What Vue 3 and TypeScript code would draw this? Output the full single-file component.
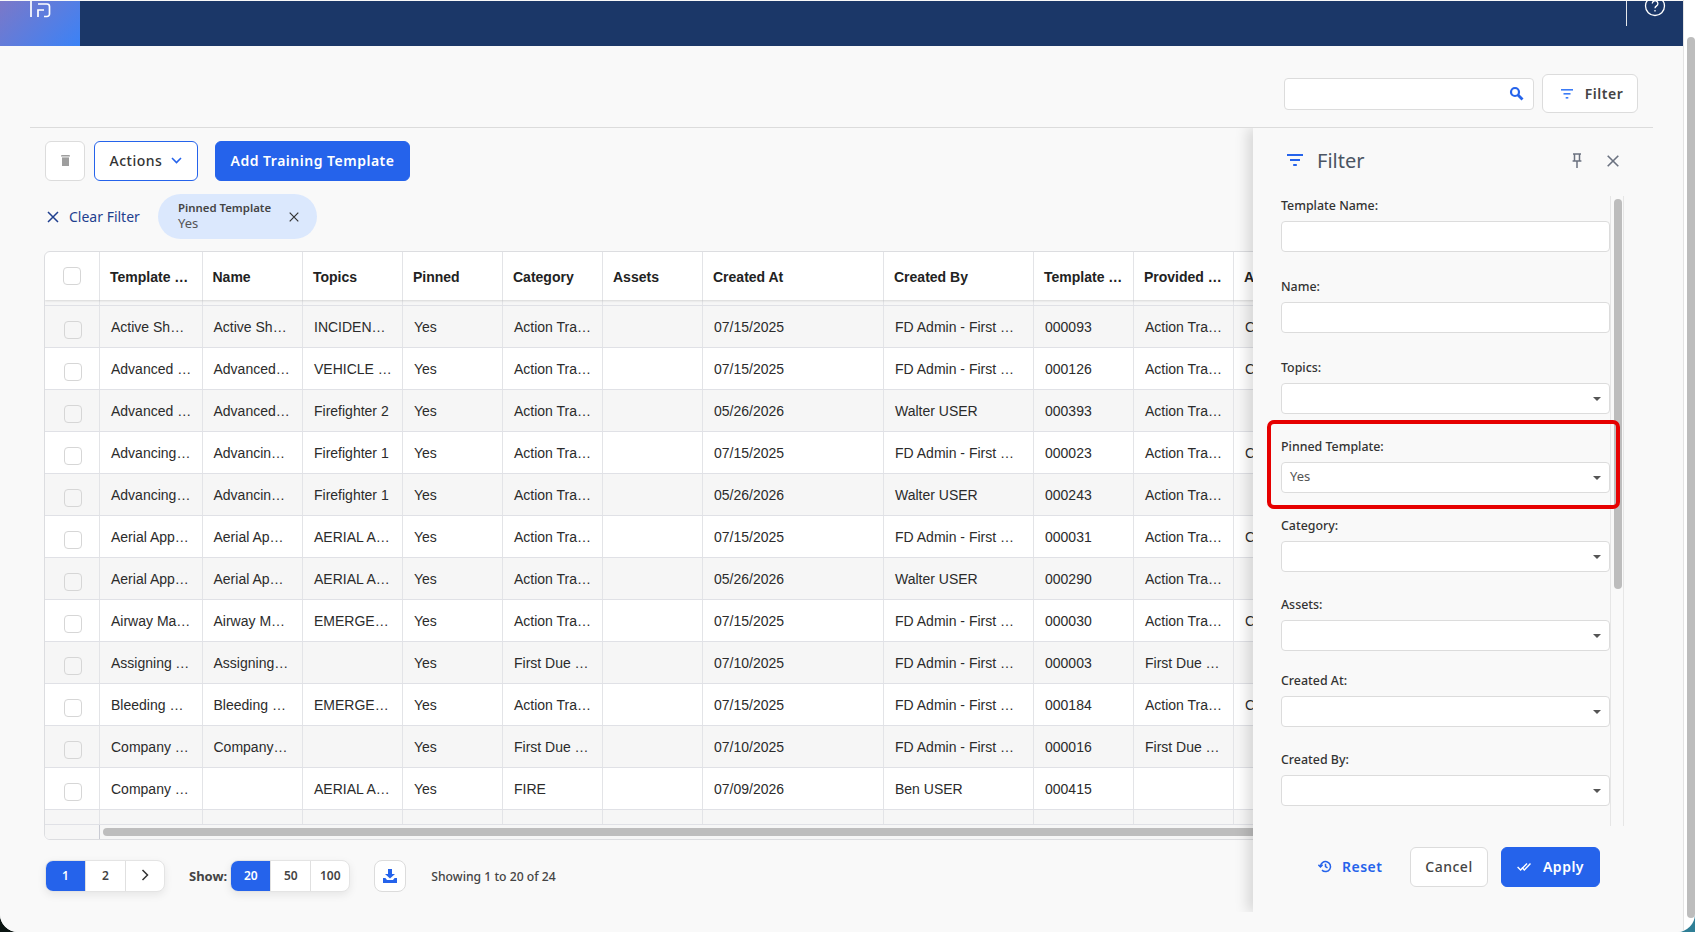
<script setup lang="ts">
type Row = [string, string, string, string, string, string, string, string, string];

const fd = "FD Admin - First Due";
const at = "Action Training";
const fdt = "First Due Training";

const rows: Row[] = [
  ["Active Shooter Response", "Active Shooter Response", "INCIDENT COMMAND", at, "07/15/2025", fd, "000093", at, "C"],
  ["Advanced Vehicle Rescue", "Advanced Vehicle Rescue", "VEHICLE RESCUE", at, "07/15/2025", fd, "000126", at, "C"],
  ["Advanced Hose Handling", "Advanced Hose Handling", "Firefighter 2", at, "05/26/2026", "Walter USER", "000393", at, ""],
  ["Advancing Hose Lines", "Advancing Hose Lines", "Firefighter 1", at, "07/15/2025", fd, "000023", at, "C"],
  ["Advancing Hose Lines", "Advancing Hose Lines", "Firefighter 1", at, "05/26/2026", "Walter USER", "000243", at, ""],
  ["Aerial Apparatus", "Aerial Apparatus", "AERIAL APPARATUS", at, "07/15/2025", fd, "000031", at, "C"],
  ["Aerial Apparatus", "Aerial Apparatus", "AERIAL APPARATUS", at, "05/26/2026", "Walter USER", "000290", at, ""],
  ["Airway Management", "Airway Management", "EMERGENCY CARE", at, "07/15/2025", fd, "000030", at, "C"],
  ["Assigning Tasks", "Assigning Tasks", "", fdt, "07/10/2025", fd, "000003", fdt, ""],
  ["Bleeding Control", "Bleeding Control", "EMERGENCY CARE", at, "07/15/2025", fd, "000184", at, "C"],
  ["Company Officer", "Company Officer", "", fdt, "07/10/2025", fd, "000016", fdt, ""],
  ["Company Drill", "", "AERIAL APPARATUS", "FIRE", "07/09/2026", "Ben USER", "000415", "", ""],
];

const heads = ["Template Name", "Name", "Topics", "Pinned", "Category", "Assets", "Created At", "Created By", "Template Code", "Provided By", "A"];
const blanks = Array.from({ length: 11 }, (_, i) => i);

const fields = [
  { label: "Template Name:", kind: "input", cls: "" },
  { label: "Name:", kind: "input", cls: "" },
  { label: "Topics:", kind: "select", cls: "" },
  { label: "Pinned Template:", kind: "select", value: "Yes", cls: "marked" },
  { label: "Category:", kind: "select", cls: "" },
  { label: "Assets:", kind: "select", cls: "tight" },
  { label: "Created At:", kind: "select", cls: "" },
  { label: "Created By:", kind: "select", cls: "" },
];
</script>

<template>
  <div class="desktop">
    <div class="window">
      <div class="page">
        <header class="topbar">
          <div class="logo">
            <svg width="22" height="17" viewBox="0 0 22 17" fill="none" stroke="#fff" stroke-width="1.7">
              <path d="M1 0v16" />
              <path d="M8 16V9h6" />
              <path d="M8 3h9a2.500 2.500 0 0 1 2.500 2.500V13a2.500 2.500 0 0 1-2.500 2.500h-3" />
            </svg>
          </div>
          <div class="topbar-end">
            <span class="divider"></span>
            <svg class="help" width="22" height="22" viewBox="0 0 22 22" fill="none" stroke="#fff" stroke-width="1.300">
              <circle cx="11" cy="11" r="9.500" />
              <path d="M8.300 8.500a2.800 2.800 0 1 1 4.300 2.400c-1 .7-1.600 1.200-1.600 2.300" />
              <path d="M11 15v1.400" />
            </svg>
          </div>
        </header>

        <main class="content">
          <div class="search-row">
            <div class="search">
              <svg width="15" height="15" viewBox="0 0 15 15" fill="none" stroke="#2563eb">
                <circle cx="6" cy="6" r="4" stroke-width="2.200" />
                <path d="M9 9l4.500 4.500" stroke-width="2.800" />
              </svg>
            </div>
            <button class="btn filter-btn">
              <svg class="bars" width="12" height="10" viewBox="0 0 12 10" fill="#3b7bf6">
                <rect x="0" y="0" width="12" height="1.600" />
                <rect x="2.500" y="4" width="7" height="1.600" />
                <rect x="4.700" y="8" width="2.600" height="1.600" />
              </svg>
              Filter
            </button>
          </div>
          <div class="rule"></div>

          <div class="toolbar">
            <button class="btn trash">
              <svg width="9" height="11" viewBox="0 0 9 11" fill="#9e9e9e">
                <path d="M1 0h7a1 1 0 0 1 1 1v.600H0V1a1 1 0 0 1 1-1z" />
                <path d="M1 2.400h7V11H1z" />
              </svg>
            </button>
            <button class="btn actions">
              Actions
              <svg width="11" height="7" viewBox="0 0 11 7" fill="none" stroke="#2563eb" stroke-width="1.600">
                <path d="M1 1l4.500 4.500L10 1" />
              </svg>
            </button>
            <button class="btn primary add">Add Training Template</button>
          </div>

          <div class="chips">
            <a class="clear">
              <svg width="12" height="12" viewBox="0 0 12 12" stroke="#1f3f8f" stroke-width="1.500">
                <path d="M1 1l10 10M11 1L1 11" />
              </svg>
              Clear Filter
            </a>
            <div class="chip">
              <div class="chip-text">
                <strong>Pinned Template</strong>
                <span>Yes</span>
              </div>
              <svg width="10" height="10" viewBox="0 0 10 10" stroke="#333" stroke-width="1.200">
                <path d="M.7.7l8.600 8.600M9.300.7L.7 9.300" />
              </svg>
            </div>
          </div>

          <div class="table">
            <div class="row head">
              <div class="cell check"><span class="box"></span></div>
              <div v-for="h in heads" :key="h" class="cell">{{ h }}</div>
            </div>
            <div class="row filler top-filler">
              <div class="cell check"></div>
              <div v-for="b in blanks" :key="b" class="cell"></div>
            </div>
            <div v-for="(r, i) in rows" :key="i" class="row body" :class="{ odd: i % 2 === 0 }">
              <div class="cell check"><span class="box"></span></div>
              <div class="cell">{{ r[0] }}</div>
              <div class="cell name">{{ r[1] }}</div>
              <div class="cell">{{ r[2] }}</div>
              <div class="cell">Yes</div>
              <div class="cell">{{ r[3] }}</div>
              <div class="cell"></div>
              <div class="cell">{{ r[4] }}</div>
              <div class="cell">{{ r[5] }}</div>
              <div class="cell">{{ r[6] }}</div>
              <div class="cell">{{ r[7] }}</div>
              <div class="cell">{{ r[8] }}</div>
            </div>
            <div class="row filler end-filler">
              <div class="cell check"></div>
              <div v-for="b in blanks" :key="b" class="cell"></div>
            </div>
            <div class="hscroll">
              <div class="hscroll-corner"></div>
              <div class="hscroll-track"><div class="hscroll-thumb"></div></div>
            </div>
          </div>

          <div class="pager-row">
            <div class="seg">
              <span class="on">1</span>
              <span>2</span>
              <span>
                <svg width="8" height="12" viewBox="0 0 8 12" fill="none" stroke="#333" stroke-width="1.500">
                  <path d="M1.500 1l5 5-5 5" />
                </svg>
              </span>
            </div>
            <b class="show">Show:</b>
            <div class="seg">
              <span class="on">20</span>
              <span>50</span>
              <span>100</span>
            </div>
            <button class="btn download">
              <svg width="14" height="14" viewBox="0 0 14 14" fill="#2563eb">
                <path d="M5 0h4v5h3L7 9.600 2 5h3z" />
                <path d="M0 9h2.400l1.600 2h6l1.600-2H14v5H0z" />
              </svg>
            </button>
            <span class="count">Showing 1 to 20 of 24</span>
          </div>
        </main>

        <aside class="panel">
          <div class="panel-head">
            <svg width="16" height="13" viewBox="0 0 16 13" fill="#2563eb">
              <rect x="0" y="0" width="16" height="2" />
              <rect x="3" y="5" width="10" height="2" />
              <rect x="6.200" y="10" width="3.600" height="2" />
            </svg>
            <span class="panel-title">Filter</span>
            <svg class="pin" width="10" height="15" viewBox="0 0 10 15" fill="none" stroke="#6b7280" stroke-width="1.500">
              <path d="M1 1h8M2.500 1v6.500M7.500 1v6.500M.6 8h8.800M5 8v7" />
            </svg>
            <svg class="close" width="12" height="12" viewBox="0 0 12 12" stroke="#6b7280" stroke-width="1.600">
              <path d="M.7.7l10.600 10.600M11.300.7L.7 11.300" />
            </svg>
          </div>
          <div class="panel-scroll">
            <div class="form">
              <div v-for="f in fields" :key="f.label" class="field" :class="f.cls">
                <label>{{ f.label }}</label>
                <div class="control">
                  <span>{{ f.value }}</span>
                  <i v-if="f.kind === 'select'" class="caret"></i>
                </div>
              </div>
            </div>
            <div class="panel-track"><div class="panel-thumb"></div></div>
          </div>
          <div class="panel-foot">
            <a class="reset">
              <svg width="14" height="13" viewBox="0 0 14 13" fill="none" stroke="#2563eb" stroke-width="1.500">
                <path d="M2.500 6.500a5 5 0 1 1 1.500 3.600" />
                <path d="M.4 4.800l2.100 2.200 2.100-2.200" />
                <path d="M7.500 3.700v3l2 1.200" />
              </svg>
              Reset
            </a>
            <button class="btn cancel">Cancel</button>
            <button class="btn primary apply">
              <svg width="14" height="9" viewBox="0 0 14 9" fill="none" stroke="#fff" stroke-width="1.400">
                <path d="M.6 5l3 3L10 1.500" />
                <path d="M5 5.500l2.300 2.500L13.500 1.500" />
              </svg>
              Apply
            </button>
          </div>
        </aside>
      </div>
      <div class="page-scroll"><div class="page-thumb"></div></div>
    </div>
  </div>
</template>

<style>
html,
body {
  margin: 0;
  overflow: hidden;
}
</style>

<style scoped>
* {
  box-sizing: border-box;
}

.desktop {
  width: 1695px;
  height: 932px;
  overflow: hidden;
  background: linear-gradient(90deg, #0b1512 0%, #0b1512 50%, #2f7f96 100%);
  font-family: "Noto Sans", sans-serif;
  color: #333;
}

.window {
  display: flex;
  height: 100%;
  border-radius: 0 0 18px 18px;
  overflow: hidden;
  background: #fff;
}

.page {
  position: relative;
  width: 1683px;
  background: #f9f9f9;
  overflow: hidden;
}

.page-scroll {
  flex: 1;
  border-left: 1px solid #e4e4e4;
  padding: 37px 0 14px 3px;
}

.page-thumb {
  height: 100%;
  background: #bdbdbd;
  border-radius: 4px;
}

.topbar {
  display: flex;
  justify-content: space-between;
  height: 45px;
  margin-top: 1px;
  background: #1b3768;
}

.logo {
  width: 80px;
  padding: 0 0 0 30px;
  background: linear-gradient(135deg, #7b78c8 0%, #3b82f6 100%);
  line-height: 0;
}

.topbar-end {
  display: flex;
  align-items: flex-start;
  padding-right: 17px;
}

.divider {
  width: 1px;
  height: 25px;
  background: #e5e7eb;
  margin-right: 17px;
}

.help {
  margin-top: -6px;
}

.content {
  padding-top: 28px;
}

.search-row {
  display: flex;
  justify-content: flex-end;
  align-items: center;
  gap: 8px;
  padding-right: 45px;
}

.search {
  display: flex;
  align-items: center;
  justify-content: flex-end;
  width: 250px;
  height: 32px;
  padding-right: 9px;
  background: #fff;
  border: 1px solid #dcdcdc;
  border-radius: 4px;
}

.btn {
  font-family: inherit;
  background: #fff;
  border: 1px solid #dcdcdc;
  border-radius: 6px;
  cursor: pointer;
  padding: 0 0 2px;
}

.filter-btn {
  display: flex;
  align-items: center;
  justify-content: center;
  gap: 12px;
  width: 96px;
  height: 39px;
  padding: 0 0 0 4px;
  font-size: 14px;
  font-weight: 600;
  letter-spacing: 0.5px;
  color: #444;
}

.rule {
  height: 1px;
  margin: 14px 30px 0 30px;
  background: #dcdcdc;
}

.toolbar {
  display: flex;
  align-items: center;
  margin: 13px 0 0 45px;
  height: 40px;
}

.trash {
  display: flex;
  align-items: center;
  justify-content: center;
  width: 40px;
  height: 40px;
}

.actions {
  display: flex;
  align-items: center;
  justify-content: center;
  gap: 9px;
  width: 104px;
  height: 40px;
  margin-left: 9px;
  border-color: #2563eb;
  font-size: 14px;
  font-weight: 500;
  letter-spacing: 0.5px;
  color: #333;
}

.primary {
  background: #2563eb;
  border-color: #2563eb;
  color: #fff;
  font-weight: 600;
  font-size: 14px;
  letter-spacing: 0.5px;
}

.add {
  width: 195px;
  height: 40px;
  margin-left: 17px;
}

.chips {
  display: flex;
  align-items: center;
  height: 45px;
  margin: 13px 0 0 47px;
}

.clear {
  display: flex;
  align-items: center;
  gap: 10px;
  width: 111px;
  font-size: 14px;
  color: #1f3f8f;
}

.chip {
  display: flex;
  align-items: center;
  justify-content: space-between;
  width: 159px;
  height: 45px;
  padding: 0 18px 0 20px;
  background: #dbe8fd;
  border-radius: 23px;
}

.chip-text {
  display: flex;
  flex-direction: column;
  margin-top: -2px;
  line-height: 15.500px;
}

.chip-text strong {
  font-size: 11.400px;
  font-weight: 600;
  color: #444;
}

.chip-text span {
  font-size: 13px;
  color: #555;
}

.table {
  width: 1609px;
  height: 589px;
  margin: 12px 0 0 44px;
  background: #fff;
  border: 1px solid #dcdde0;
  border-radius: 6px;
  overflow: hidden;
  font-family: "Liberation Sans", Arial, sans-serif;
  font-size: 14px;
  color: #2b2b2b;
}

.row {
  display: grid;
  grid-template-columns: 55px 102.500px 100.500px 100px 100px 100px 100px 181px 150px 100px 100px 1fr;
}

.cell {
  display: flex;
  align-items: center;
  min-width: 0;
  padding: 0 10px 0 11px;
  border-right: 1px solid #e3e4e7;
  overflow: hidden;
  white-space: nowrap;
  text-overflow: ellipsis;
}

.row.body .cell {
  display: block;
  line-height: 42px;
}

.row.body .cell.name {
  padding-right: 12px;
}

.head {
  height: 48px;
  position: relative;
  font-weight: 700;
  color: #222;
  box-shadow: 0 1px 2px rgba(0, 0, 0, 0.12);
}

.head .cell {
  display: block;
  padding: 1px 8px 0 10px;
  line-height: 48px;
}

.head .check,
.row.body .cell.check {
  display: flex;
  align-items: flex-start;
  justify-content: center;
  padding: 15px 0 0 2px;
}

.head .check {
  padding: 15px 1px 0 0;
}

.box {
  width: 18px;
  height: 18px;
  background: #fff;
  border: 1px solid #d6d6d6;
  border-radius: 4px;
}

.odd .box {
  background: #f6f6f6;
}

.filler {
  background: #f6f6f6;
  border-bottom: 1px solid #e0e1e6;
}

.top-filler {
  height: 6px;
}

.end-filler {
  height: 15px;
}

.body {
  height: 42px;
  border-bottom: 1px solid #e0e1e6;
}

.odd {
  background: #f6f6f6;
}

.hscroll {
  display: flex;
  height: 15px;
  background: #f6f6f6;
}

.hscroll-corner {
  width: 55px;
  border-right: 1px solid #c9cbd3;
}

.hscroll-track {
  flex: 1;
  padding: 3px 3px;
}

.hscroll-thumb {
  height: 8px;
  background: #bdbdbd;
  border-radius: 4px;
}

.pager-row {
  display: flex;
  align-items: center;
  height: 32px;
  margin: 20px 0 0 45px;
  font-size: 12px;
}

.seg {
  display: flex;
  height: 32px;
  background: #fff;
  border: 1px solid #e4e4e4;
  border-radius: 8px;
  overflow: hidden;
  box-shadow: 0 3px 8px rgba(0, 0, 0, 0.08);
}

.seg span {
  display: flex;
  align-items: center;
  justify-content: center;
  width: 40px;
  padding-bottom: 2px;
  font-weight: 600;
  color: #444;
  border-left: 1px solid #e0e0e0;
}

.seg span:first-child {
  border-left: 0;
  width: 39px;
}

.seg span:last-child {
  width: 39px;
}

.seg .on {
  background: #2563eb;
  color: #fff;
}

.show {
  margin: 0 3px 0 24px;
  font-size: 13px;
  font-weight: 700;
  color: #444;
}

.download {
  display: flex;
  align-items: center;
  justify-content: center;
  width: 32px;
  height: 32px;
  margin: 0 25px 0 24px;
  padding: 0;
  border-radius: 8px;
}

.count {
  font-size: 12.200px;
  font-weight: 500;
  color: #444;
}

.panel {
  position: absolute;
  top: 128px;
  left: 1253px;
  width: 430px;
  height: 784px;
  background: #f9f9f9;
  box-shadow: -6px 0 12px rgba(0, 0, 0, 0.13);
  clip-path: inset(0 0 0 -20px);
}

.panel-head {
  display: flex;
  align-items: center;
  height: 65px;
  margin-bottom: 3px;
  padding: 0 0 0 34px;
}

.panel-title {
  margin-left: 14px;
  font-size: 20px;
  color: #4b5563;
  flex: 1;
}

.pin {
  margin-right: 25px;
}

.close {
  margin-right: 64px;
}

.panel-scroll {
  display: flex;
  height: 630px;
}

.form {
  position: relative;
  z-index: 1;
  width: 357px;
  padding-left: 28px;
}

.field {
  height: 81px;
  position: relative;
}

.field:nth-child(n + 3) {
  height: 79px;
}

.field.tight {
  height: 76px;
}

.field label {
  display: block;
  height: 25px;
  padding-top: 1px;
  font-size: 12.400px;
  font-weight: 500;
  line-height: 18px;
  color: #333;
}

.control {
  display: flex;
  align-items: center;
  justify-content: space-between;
  width: 329px;
  height: 31px;
  padding: 0 8px 3px;
  font-size: 13px;
  color: #555;
  background: #fff;
  border: 1px solid #dcdcdc;
  border-radius: 4px;
}

.caret {
  width: 0;
  height: 0;
  margin-top: 3px;
  border: 4px solid transparent;
  border-top: 4.500px solid #555;
  border-bottom: 0;
}

.marked::before {
  content: "";
  box-sizing: border-box;
  position: absolute;
  top: -17px;
  left: -14px;
  width: 353px;
  height: 89px;
  border: 4px solid #e60000;
  border-radius: 7px;
  pointer-events: none;
}

.panel-track {
  width: 14px;
  padding: 3px 0 0 3px;
  border-left: 1px solid #e6e6e6;
  border-right: 1px solid #e6e6e6;
}

.panel-thumb {
  width: 8px;
  height: 390px;
  background: #bdbdbd;
  border-radius: 4px;
}

.panel-foot {
  display: flex;
  align-items: center;
  height: 40px;
  margin-top: 21px;
  padding-left: 65px;
}

.reset {
  display: flex;
  align-items: center;
  gap: 10px;
  width: 92px;
  margin-top: -2px;
  font-size: 14px;
  font-weight: 600;
  letter-spacing: 0.5px;
  color: #2563eb;
}

.cancel {
  width: 78px;
  height: 40px;
  font-size: 14px;
  font-weight: 500;
  letter-spacing: 0.5px;
  color: #444;
}

.apply {
  display: flex;
  align-items: center;
  justify-content: center;
  gap: 12px;
  width: 99px;
  height: 40px;
  margin-left: 13px;
}
</style>
